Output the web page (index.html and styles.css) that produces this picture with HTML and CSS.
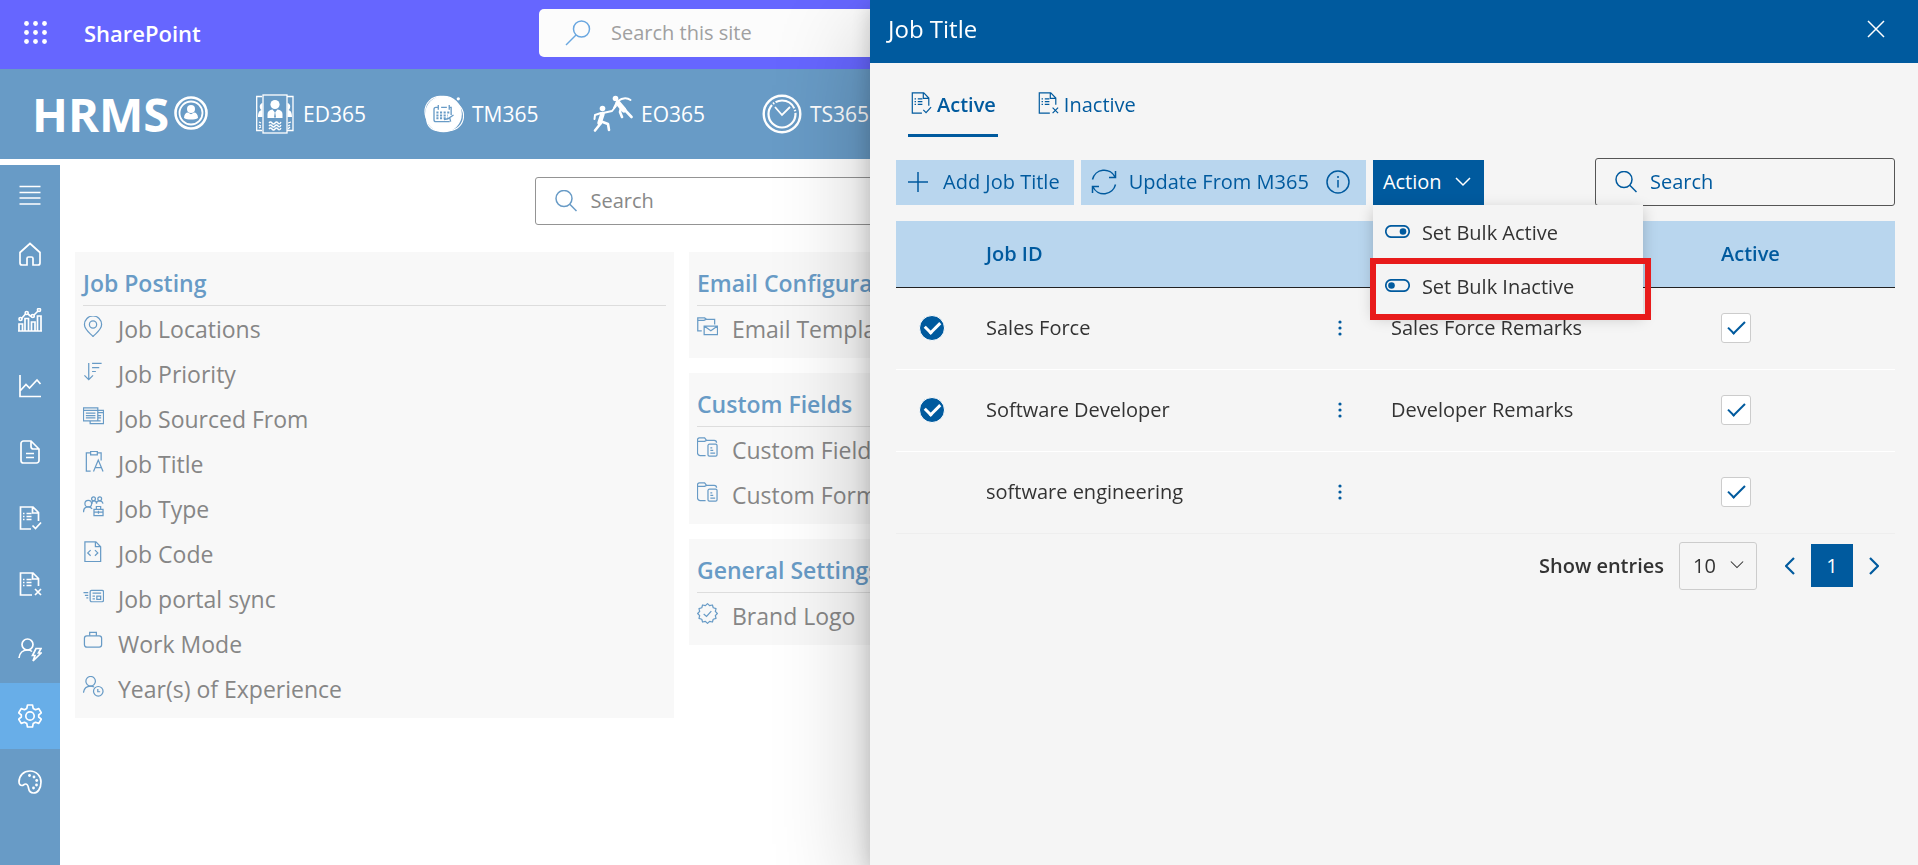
FILE: index.html
```html
<!DOCTYPE html>
<html lang="en">
<head>
<meta charset="utf-8">
<meta name="viewport" content="width=device-width, initial-scale=1">
<title>HRMS - Job Title</title>
<link rel="stylesheet" href="styles.css">
</head>
<body>
<svg class="sprite" aria-hidden="true">
  <symbol id="i-list-check" viewBox="0 0 24 24"><path d="M13 23H2.500V1H15l5.500 5.500V15M14.500 1.500V7H20"/><path d="M5 7.500h1.500M8.500 7.500h5M5 10.500h1.500M8.500 10.500h5M5 13.500h1.500M8.500 13.500h5"/><path d="m14.500 19.500 3 3 5.500-6"/></symbol>
  <symbol id="i-list-x" viewBox="0 0 24 24"><path d="M14 23H2.500V1H15l5.500 5.500V14M14.500 1.500V7H20"/><path d="M5 7.500h1.500M8.500 7.500h5M5 10.500h1.500M8.500 10.500h5M5 13.500h1.500M8.500 13.500h5"/><path d="m17 17 6 6m0-6-6 6"/></symbol>
  <symbol id="i-folder-form" viewBox="0 0 22 22"><path d="M9 19.500H3.500a3 3 0 0 1-3-3V3a2 2 0 0 1 2-2h5.500l2 2.500H18a2.500 2.500 0 0 1 2.500 2.500M.5 4.500h7.500l2-1"/><rect x="11.500" y="7.500" width="9.500" height="12.500" rx="1.500"/><path d="M14 11.500h2M14 14h3M14 16.800h5"/></symbol>
  <symbol id="i-search" viewBox="0 0 22 22"><circle cx="9" cy="8.500" r="8"/><path d="m14.800 14.300 6.700 6.700"/></symbol>
  <symbol id="i-chevron" viewBox="0 0 16 16"><path d="m1 4 7 7 7-7"/></symbol>
</svg>

<div class="page">
  <header class="suite-bar">
    <button class="waffle" aria-label="App launcher">
      <svg width="24" height="24" viewBox="0 0 24 24"><circle cx="2.500" cy="2.500" r="2.400"/><circle cx="11.500" cy="2.500" r="2.400"/><circle cx="20.500" cy="2.500" r="2.400"/><circle cx="2.500" cy="11.500" r="2.400"/><circle cx="11.500" cy="11.500" r="2.400"/><circle cx="20.500" cy="11.500" r="2.400"/><circle cx="2.500" cy="20.500" r="2.400"/><circle cx="11.500" cy="20.500" r="2.400"/><circle cx="20.500" cy="20.500" r="2.400"/></svg>
    </button>
    <a class="suite-name" href="#">SharePoint</a>
    <label class="suite-search">
      <svg width="26" height="26" viewBox="0 0 26 26"><circle cx="16.500" cy="9" r="8"/><path d="M11 15 1 25"/></svg>
      <input type="search" placeholder="Search this site" aria-label="Search this site">
    </label>
  </header>

  <div class="app-bar">
    <a class="logo" href="#">HRMS<svg width="34" height="34" viewBox="0 0 34 34"><circle cx="17" cy="17" r="15.500" stroke-width="2.600"/><circle cx="17" cy="17" r="11.500" stroke-width="1.800"/><g fill="#fff" stroke="none"><circle cx="17" cy="13" r="4"/><path d="M10 22c0-3.500 1.800-5.500 4-5.500l3 1.800 3-1.800c2.200 0 4 2 4 5.500-3 2-11 2-14 0z"/></g></svg></a>
    <nav class="apps">
      <a href="#"><svg width="40" height="40" viewBox="0 0 40 40"><g stroke-width="1.300"><path d="M7 2.500H1.700v34H7M32 2.500h6v34h-6"/><rect x="8" y="1" width="24" height="38"/><path d="M14 29q1.500-2 3 0t3 0 3 0 3-1M14 32q1.500-2 3 0t3 0 3 0 3-1M14 35q1.500-2 3 0t3 0 3 0 3-1M4 28l2 1M4 31l2 1M4 34l2-1M33 29l3-1M33 32l2-1M33 35l2-2"/></g><g fill="#fff" stroke="none"><circle cx="20" cy="10.500" r="4.600"/><path d="M12.500 24v-4c0-2.500 2-4 5-4.500l2.500 3 2.500-3c3 .5 5 2 5 4.500v4z"/><path d="M7.500 9c-4 1-3 6-1 7-3 1-3.500 4-3.500 7h4.500zM32.500 9c4 1 3 6 1 7 3 1 3.500 4 3.500 7h-4.500z"/></g><path d="m20 17-1 6.500h2z" fill="#689bc6" stroke="none"/></svg>ED365</a>
      <a href="#"><svg width="40" height="40" viewBox="0 0 42 40"><g stroke-width="1.200"><circle cx="17" cy="17.500" r="16"/><circle cx="26" cy="22" r="15.500"/><circle cx="14.500" cy="26" r="11.500"/></g><circle cx="20.500" cy="20" r="18.500" fill="#fff"/><circle cx="36" cy="4" r="1.700" fill="#fff" stroke="none"/><g stroke="#689bc6" stroke-width="1.400"><path d="M27 28H12.500a2 2 0 0 1-2-2V15a2 2 0 0 1 2-2H15m3 0h6m3 0h1.500v8M15 10.500v5M26.500 10.500v5"/><path d="M13 18.500h14M13 21.500h12M13 24.500h12" stroke-dasharray="2.200 1.600" stroke-width="2"/><path d="m21 26 4-1 6-4M27 24l1 4"/></g></svg>TM365</a>
      <a href="#"><svg width="40" height="40" viewBox="0 0 40 40" stroke-linecap="round" stroke-linejoin="round"><g fill="#fff" stroke="none"><circle cx="9.500" cy="14.500" r="2.800"/><circle cx="22.500" cy="4.500" r="2.800"/></g><path d="m9.500 20-3 9" stroke-width="4.500"/><path d="m8 29-6 7.500M7 27l8 3 1 6" stroke-width="2.600"/><path d="m8 19-6 2-.5 4M10 19l9-2 4-5" stroke-width="2"/><path d="m25 9 6 7" stroke-width="5"/><path d="m31 15 7.500 8M28 14l-1 4 2 5" stroke-width="2.600"/><path d="M25 7c5-4 10-3 12.500-1M24 8l-3 6" stroke-width="2"/></svg>EO365</a>
      <a href="#"><svg width="40" height="40" viewBox="0 0 40 40"><circle cx="20" cy="20" r="18.300" stroke-width="2.400"/><circle cx="20" cy="20" r="13.500" stroke-width="2.200" stroke-dasharray="52 1.500 1.500 1.500 22 1.500 1.500 1.500"/><path d="m13 13 7 8 8-8" stroke-width="1.800"/></svg>TS365</a>
    </nav>
  </div>

  <div class="workspace">
    <nav class="rail" aria-label="Main">
      <button class="rail-menu" aria-label="Menu"><svg viewBox="0 0 24 24"><path d="M1.500 3.500h21M1.500 9.500h21M1.500 15h21M1.500 21h21"/></svg></button>
      <a href="#" aria-label="Home"><svg viewBox="0 0 24 24"><path d="M2 10.500 12 1.500l10 9V21a2 2 0 0 1-2 2h-5v-6.500a1.500 1.500 0 0 0-1.500-1.500h-3A1.500 1.500 0 0 0 9 16.500V23H4a2 2 0 0 1-2-2z"/></svg></a>
      <a href="#" aria-label="Dashboard"><svg viewBox="0 0 24 24"><path d="M1 23v-7h3.500v7M7 23V10.500h3.500V23M13.500 23v-9H17v9M19.500 23V8H23v15M0 23h24M3.500 10.500l4-4.500M10 6l3 2.500M16 7l4-4"/><circle cx="2.500" cy="11" r="1.500"/><circle cx="8.700" cy="5" r="1.500"/><circle cx="14.800" cy="8" r="1.500"/><circle cx="21" cy="2" r="1.500"/></svg></a>
      <a href="#" aria-label="Reports"><svg viewBox="0 0 24 24"><path d="M2 1v21.500h21M2 17l6-6.500 3.500 3.500L19 6l3.500 4"/></svg></a>
      <a href="#" aria-label="Documents"><svg viewBox="0 0 24 24"><path d="M13 1H5.500A2.500 2.500 0 0 0 3 3.500v17A2.500 2.500 0 0 0 5.500 23h13a2.500 2.500 0 0 0 2.500-2.500V9zM13 1v5.500A2.500 2.500 0 0 0 15.500 9H21M8 13.500h8M8 17.500h8"/></svg></a>
      <a href="#" aria-label="Approved"><svg><use href="#i-list-check"/></svg></a>
      <a href="#" aria-label="Rejected"><svg><use href="#i-list-x"/></svg></a>
      <a href="#" aria-label="User actions"><svg viewBox="0 0 24 24"><circle cx="9.500" cy="6.500" r="5.500"/><path d="M1 20c.5-5 4-8 8.500-8 2 0 3.500.5 4.500 1.500M18 10.500h5L20.500 15H23l-8 8 2-5.500h-2.500z"/></svg></a>
      <a href="#" aria-label="Settings" class="is-current"><svg viewBox="0 0 24 24"><circle cx="12" cy="12" r="4.200"/><path d="M9.500 1h5l.7 3.400 2.300 1.300 3.300-1.100 2.500 4.200L20.700 11v2l2.600 2.200-2.500 4.200-3.300-1.100-2.300 1.300-.7 3.400h-5l-.7-3.400-2.300-1.300-3.300 1.100L.7 15.200 3.300 13v-2L.7 8.800l2.500-4.200 3.300 1.100 2.300-1.300z" stroke-linejoin="round"/></svg></a>
      <a href="#" aria-label="Theme"><svg viewBox="0 0 24 24"><path d="M1 12C1 5.500 5.500 1 12 1s11 5 11 11c0 7-3.500 11-7.500 11-3 0-4.500-2-5-5-.4-2.500-1-4-3-4-1.500 0-2 1.500-3.500 1.500S1 14.500 1 12z"/><g fill="#fff" stroke="none"><circle cx="11.500" cy="5.500" r="1.400"/><circle cx="16" cy="7" r="1.400"/><circle cx="18.700" cy="10.500" r="1.400"/><circle cx="18.500" cy="15" r="1.400"/><circle cx="15.500" cy="18" r="1.400"/></g></svg></a>
    </nav>

    <main class="main">
      <label class="page-search">
        <svg width="22" height="22"><use href="#i-search"/></svg>
        <input type="search" placeholder="Search" aria-label="Search settings">
      </label>
      <div class="columns">
        <div class="column">
          <section class="card">
            <h2>Job Posting</h2>
            <ul>
              <li><a href="#"><svg viewBox="0 0 22 22"><path d="M10.500 21.500C6 17 1.500 14 1.500 9a9 9 0 0 1 18 0c0 5-4.500 8-9 12.500z"/><circle cx="10.500" cy="9" r="3.800"/></svg>Job Locations</a></li>
              <li><a href="#"><svg viewBox="0 0 22 22"><path d="M6 2v17.500M1.500 15 6 19.500l4.500-4.500M9.500 2.500h10M9.500 7h7.500M9.500 11h4"/></svg>Job Priority</a></li>
              <li><a href="#"><svg viewBox="0 0 22 22"><path d="M.5 2h15v13.500H.5zM.5 4.500h15M3 7.500h10M3 10h10M3 12.500h10M15.500 4.500h6V18.500h-14v-3M15.500 7h6M15.500 10h3.500M15.500 12.500h3.500M15.500 15.500h3"/></svg>Job Sourced From</a></li>
              <li><a href="#"><svg viewBox="0 0 22 22"><path d="M8 21H3.500V2H8m7 0h4v8M8 .5h7V4H8zM11 21.500l5-12 5 12M13 17.500h6.500"/></svg>Job Title</a></li>
              <li><a href="#"><svg viewBox="0 0 22 22"><circle cx="5.500" cy="8" r="3.500"/><path d="M.5 17c0-3.500 2-5.500 5-5.500 1.500 0 3 .5 4 2"/><circle cx="11" cy="3" r="2"/><circle cx="17.500" cy="3" r="2"/><path d="M9.500 8c0-2 .5-3 2-3s2.700 1 2.700 3c0-2 1-3 3-3s3.300 1 3.800 3M11.500 14h9.500v6.500h-9.500zM14 14v-3h4.500v3M11.500 17h9.500M16.200 15.500v3"/></svg>Job Type</a></li>
              <li><a href="#"><svg viewBox="0 0 22 22"><path d="M2 .8h11.500L18.500 6v15.500H2zM13 1v5h5M8 9.500l-3 3 3 3M12.500 9.500l3 3-3 3"/></svg>Job Code</a></li>
              <li><a href="#"><svg viewBox="0 0 22 22"><rect x="7.500" y="4.500" width="14" height="12" rx="1.500"/><path d="M.5 7h5M2 9.800h3.500M3.500 12.500h2M10 7.500h9M10 10.500h2.500M10 13.500h2.500M14.500 10.500h4v3.500h-4z"/></svg>Job portal sync</a></li>
              <li><a href="#"><svg viewBox="0 0 22 22"><rect x="1.500" y="5" width="18" height="12" rx="2.500"/><path d="M7 5V1.500h7V5"/></svg>Work Mode</a></li>
              <li><a href="#"><svg viewBox="0 0 22 22"><circle cx="8" cy="5.500" r="5"/><path d="M.5 17.500c.5-4.500 3.500-7 7.500-7 1.500 0 2.500.3 3.500 1"/><circle cx="16" cy="16" r="5"/><path d="M15.500 13.500v3H18"/></svg>Year(s) of Experience</a></li>
            </ul>
          </section>
        </div>
        <div class="column">
          <section class="card">
            <h2>Email Configuration</h2>
            <ul>
              <li><a href="#"><svg viewBox="0 0 22 22"><path d="M5 15.500H.8V2H8l2 1.500h8.500V9M.8 4.500h6.500l2-1M7.500 10.500h14v9h-14zl7 5 7-5"/></svg>Email Templates</a></li>
            </ul>
          </section>
          <section class="card">
            <h2>Custom Fields</h2>
            <ul>
              <li><a href="#"><svg><use href="#i-folder-form"/></svg>Custom Fields</a></li>
              <li><a href="#"><svg><use href="#i-folder-form"/></svg>Custom Forms</a></li>
            </ul>
          </section>
          <section class="card">
            <h2>General Settings</h2>
            <ul>
              <li><a href="#"><svg viewBox="0 0 22 22"><path stroke-linejoin="round" d="M11 .7 13.200 2.800 16.150 2.080 17 5 19.920 5.850 19.200 8.800 21.300 11 19.200 13.200 19.920 16.150 17 17 16.150 19.920 13.200 19.200 11 21.300 8.800 19.200 5.850 19.920 5 17 2.080 16.150 2.800 13.200.7 11 2.800 8.800 2.080 5.850 5 5 5.850 2.080 8.800 2.800z"/><path d="m7 11.500 3 2.500 5-5.500"/></svg>Brand Logo</a></li>
            </ul>
          </section>
        </div>
      </div>
    </main>
  </div>
</div>

<aside class="panel" role="dialog" aria-labelledby="panel-title">
  <header class="panel-head">
    <h1 id="panel-title">Job Title</h1>
    <button class="close" aria-label="Close"><svg width="18" height="18" viewBox="0 0 18 18"><path d="m1 1 16 16M17 1 1 17"/></svg></button>
  </header>
  <div class="panel-body">
    <div class="tabs" role="tablist">
      <button role="tab" aria-selected="true" class="tab is-active"><svg width="22" height="22"><use href="#i-list-check"/></svg>Active</button>
      <button role="tab" aria-selected="false" class="tab"><svg width="22" height="22"><use href="#i-list-x"/></svg>Inactive</button>
    </div>

    <div class="toolbar">
      <button class="tool tool-add"><svg width="20" height="20" viewBox="0 0 20 20"><path d="M10 0v20M0 10h20"/></svg>Add Job Title</button>
      <button class="tool tool-update"><svg width="26" height="26" viewBox="0 0 26 26"><path d="M1.500 10.500A12 12 0 0 1 24 8M24.500 2v6.500H18M24.500 15.500A12 12 0 0 1 2 18M1.500 24v-6.500H8"/></svg>Update From M365<svg class="info" width="24" height="24" viewBox="0 0 24 24"><circle cx="12" cy="12" r="11"/><path d="M12 10v7.500M12 6v2"/></svg></button>
      <div class="action">
        <button class="action-btn" aria-haspopup="menu" aria-expanded="true">Action<svg width="16" height="16"><use href="#i-chevron"/></svg></button>
        <div class="menu" role="menu">
          <button role="menuitem"><svg width="25" height="13" viewBox="0 0 25 13"><rect x=".8" y=".8" width="23.400" height="11.400" rx="5.700"/><circle cx="18" cy="6.500" r="3.300"/></svg>Set Bulk Active</button>
          <button role="menuitem" class="is-marked"><svg width="25" height="13" viewBox="0 0 25 13"><rect x=".8" y=".8" width="23.400" height="11.400" rx="5.700"/><circle cx="6.500" cy="6.500" r="3.300"/></svg>Set Bulk Inactive</button>
        </div>
      </div>
      <label class="panel-search">
        <svg width="22" height="22"><use href="#i-search"/></svg>
        <input type="search" placeholder="Search" aria-label="Search job titles">
      </label>
    </div>

    <table class="grid">
      <colgroup><col class="c-pick"><col class="c-id"><col class="c-more"><col class="c-remarks"><col class="c-active"></colgroup>
      <thead>
        <tr><th></th><th scope="col">Job ID</th><th></th><th scope="col" aria-label="Remarks"></th><th scope="col">Active</th></tr>
      </thead>
      <tbody>
        <tr><td class="pick"><input type="checkbox" checked aria-label="Select Sales Force"></td><td>Sales Force</td><td class="more"><button aria-label="More"><svg width="4" height="16" viewBox="0 0 4 16"><circle cx="2" cy="2" r="1.600"/><circle cx="2" cy="8" r="1.600"/><circle cx="2" cy="14" r="1.600"/></svg></button></td><td>Sales Force Remarks</td><td class="state"><input type="checkbox" checked aria-label="Sales Force active"></td></tr>
        <tr><td class="pick"><input type="checkbox" checked aria-label="Select Software Developer"></td><td>Software Developer</td><td class="more"><button aria-label="More"><svg width="4" height="16" viewBox="0 0 4 16"><circle cx="2" cy="2" r="1.600"/><circle cx="2" cy="8" r="1.600"/><circle cx="2" cy="14" r="1.600"/></svg></button></td><td>Developer Remarks</td><td class="state"><input type="checkbox" checked aria-label="Software Developer active"></td></tr>
        <tr><td class="pick"><input type="checkbox" aria-label="Select software engineering"></td><td>software engineering</td><td class="more"><button aria-label="More"><svg width="4" height="16" viewBox="0 0 4 16"><circle cx="2" cy="2" r="1.600"/><circle cx="2" cy="8" r="1.600"/><circle cx="2" cy="14" r="1.600"/></svg></button></td><td></td><td class="state"><input type="checkbox" checked aria-label="software engineering active"></td></tr>
      </tbody>
    </table>

    <div class="pager">
      <label for="entries">Show entries</label>
      <div class="select">
        <select id="entries"><option>10</option><option>20</option><option>50</option></select>
        <svg width="14" height="14"><use href="#i-chevron"/></svg>
      </div>
      <button class="step" aria-label="Previous page"><svg width="10" height="18" viewBox="0 0 10 18"><path d="M9 1 1 9l8 8"/></svg></button>
      <button class="current" aria-current="page">1</button>
      <button class="step" aria-label="Next page"><svg width="10" height="18" viewBox="0 0 10 18"><path d="m1 1 8 8-8 8"/></svg></button>
    </div>
  </div>
</aside>
</body>
</html>
```
FILE: styles.css
```css
:root {
  --brand: #005a9e;
  --brand-soft: #689bc6;
  --brand-pale: #b9d6ee;
  --surface: #f5f5f5;
  --text: #333;
  --font: "Open Sans", "Noto Sans", sans-serif;
}

* { box-sizing: border-box; }

html, body { height: 100%; }

body {
  margin: 0;
  overflow: hidden;
  background: #fff;
  color: var(--text);
  font: 20px/28px var(--font);
}

button, input, select { font: inherit; color: inherit; }
button { padding: 0; border: 0; background: none; cursor: pointer; }
a { color: inherit; text-decoration: none; }
svg { display: block; flex: none; fill: none; stroke: currentColor; stroke-width: 1.500; }
input[type="search"] {
  appearance: none;
  flex: 1;
  min-width: 0;
  padding: 0;
  border: 0;
  outline: 0;
  background: none;
}
input::placeholder { color: inherit; opacity: 1; }
.sprite { position: absolute; width: 0; height: 0; }

.page { display: flex; flex-direction: column; height: 100%; }

/* Suite bar */
.suite-bar {
  display: flex;
  align-items: center;
  flex: none;
  height: 69px;
  padding: 0 24px 3px;
  background: #66f;
  color: #fff;
}
.waffle svg { fill: #fff; stroke: none; }
.suite-name { width: 455px; margin-left: 36px; font-weight: 600; font-size: 22px; }
.suite-search {
  display: flex;
  align-items: center;
  gap: 20px;
  width: 840px;
  height: 48px;
  padding: 0 26px;
  border-radius: 5px;
  background: #fcfcfc;
  color: #a0a0a0;
}
.suite-search svg { color: #6aa7e0; }

/* App bar */
.app-bar {
  display: flex;
  align-items: center;
  flex: none;
  height: 90px;
  margin-bottom: 6px;
  padding: 0 32px;
  background: var(--brand-soft);
  color: #fff;
}
.logo {
  display: flex;
  align-items: center;
  gap: 5px;
  width: 223px;
  font-size: 47px;
  font-weight: 700;
  line-height: 60px;
}
.logo svg { margin-bottom: 2px; }
.apps { display: grid; grid-auto-flow: column; grid-auto-columns: 169px; }
.apps a { display: flex; align-items: center; gap: 8px; font-size: 21px; }

/* Side rail */
.workspace { display: flex; flex: 1; min-height: 0; }
.rail {
  display: flex;
  flex-direction: column;
  flex: none;
  width: 60px;
  background: var(--brand-soft);
  color: #fff;
}
.rail a, .rail-menu { display: grid; place-items: center; height: 66px; }
.rail .rail-menu { height: 56px; padding-top: 4px; }
.rail svg { width: 24px; height: 24px; stroke-width: 1.700; }
.rail .is-current { background: #68aee8; }

/* Settings area */
.main { flex: 1; min-width: 0; padding: 12px 16px 15px 15px; }
.page-search {
  display: flex;
  align-items: center;
  gap: 14px;
  width: 908px;
  height: 48px;
  margin: 0 auto 27px;
  padding: 0 19px;
  border: 1px solid #949494;
  border-radius: 3px;
  color: #888;
}
.page-search svg { color: var(--brand-soft); }
.columns { display: grid; grid-template-columns: repeat(3, 1fr); gap: 15px; }
.column { display: flex; flex-direction: column; gap: 15px; }
.card { padding: 8px 8px 7px; background: #f8f8f8; }
.card h2 {
  margin: 0;
  padding: 9px 0 8px;
  border-bottom: 1px solid #ddd;
  color: var(--brand-soft);
  font-size: 23px;
  font-weight: 600;
  line-height: 28px;
}
.card ul { margin: 0; padding: 0; list-style: none; }
.card li a { display: flex; align-items: center; gap: 14px; height: 45px; color: #868686; font-size: 23px; }
.card li svg { width: 21px; height: 21px; margin-bottom: 4px; color: var(--brand-soft); stroke-width: 1.300; }

/* Side panel */
.panel {
  position: fixed;
  inset: 0 0 0 auto;
  width: 1048px;
  max-width: 100%;
  background: var(--surface);
  box-shadow: 0 32px 90px rgba(0, 0, 0, .24), 0 6px 20px rgba(0, 0, 0, .18);
}
.panel-head {
  display: flex;
  align-items: center;
  justify-content: space-between;
  height: 63px;
  padding: 0 33px 6px 18px;
  background: var(--brand);
  color: #fff;
}
.panel-head h1 { margin: 0; font-size: 24px; font-weight: 400; }
.panel-body { padding: 17px 23px 20px 26px; }

.tabs { display: flex; gap: 37px; padding-left: 12px; margin-bottom: 21px; color: var(--brand); }
.tab { display: flex; align-items: center; gap: 5px; height: 57px; padding: 0 2px 5px; border-bottom: 3px solid transparent; }
.tab.is-active { border-bottom-color: var(--brand); font-weight: 600; }
.tab svg { margin-bottom: 4px; stroke-width: 1.300; }

.toolbar { display: flex; align-items: center; gap: 7px; margin-bottom: 15px; }
.tool { display: flex; align-items: center; height: 45px; background: var(--brand-pale); color: var(--brand); }
.tool-add { gap: 15px; padding: 0 14px 0 12px; }
.tool-update { gap: 12px; padding: 0 16px 0 10px; }
.tool .info { margin-left: 5px; }
.action { position: relative; }
.action-btn { display: flex; align-items: center; gap: 13px; height: 45px; padding: 0 13px 0 10px; background: var(--brand); color: #fff; }
.menu {
  position: absolute;
  top: 100%;
  left: 0;
  z-index: 1;
  width: 270px;
  padding-top: 1px;
  background: #f4f4f4;
  box-shadow: 0 4px 14px rgba(0, 0, 0, .2);
}
.menu button { position: relative; display: flex; align-items: center; gap: 12px; width: 100%; height: 54px; padding-left: 12px; }
.menu svg { margin-bottom: 3px; color: var(--brand); stroke-width: 1.700; }
.menu circle { fill: currentColor; stroke: none; }
.menu .is-marked::after { content: ""; position: absolute; inset: -2px -8px -6px -3px; border: 6px solid #e81b1b; }
.panel-search {
  display: flex;
  align-items: center;
  gap: 13px;
  width: 300px;
  height: 48px;
  margin-left: auto;
  padding: 0 19px;
  border: 1px solid #555;
  border-radius: 3px;
  color: var(--brand);
}

/* Job title table */
.grid { width: 100%; border-collapse: collapse; table-layout: fixed; }
.c-pick { width: 90px; }
.c-more { width: 74px; }
.c-remarks { width: 330px; }
.c-active { width: 174px; }
.grid th { height: 66px; padding: 0; border-bottom: 1px solid #222; background: var(--brand-pale); color: var(--brand); font-weight: 600; text-align: left; }
.grid td { height: 82px; padding: 0; border-bottom: 1px solid #fff; }
.grid tr:last-child td { border-color: #eee; }
.grid input { appearance: none; display: grid; place-items: center; margin: 0; }
.grid input::after { content: ""; border: solid; border-width: 0 0 1px 1px; transform: rotate(-45deg); }
.pick input { width: 26px; height: 26px; margin-left: 23px; border: 1px solid #fff; border-radius: 50%; background: var(--brand); color: #fff; }
.pick input:not(:checked) { opacity: 0; }
.pick input::after { width: 12px; height: 7px; margin-bottom: 4px; border-width: 0 0 3px 3px; }
.more button { display: block; margin-left: 21px; }
.more svg { fill: var(--brand); stroke: none; }
.state input { width: 30px; height: 30px; border: 1px solid #ccc; border-radius: 3px; background: #fff; color: var(--brand); }
.state input::after { width: 15px; height: 7px; margin-bottom: 5px; border-width: 0 0 2px 2px; }

/* Pager */
.pager { display: flex; align-items: center; justify-content: flex-end; padding: 8px 16px 0 0; }
.pager label { font-weight: 600; }
.select { position: relative; margin: 0 28px 0 15px; }
.select select { appearance: none; width: 78px; height: 48px; padding: 0 13px; border: 1px solid #ccc; border-radius: 3px; background: transparent; }
.select svg { position: absolute; top: 16px; right: 13px; stroke-width: 1.200; pointer-events: none; }
.step { color: var(--brand); }
.step svg { stroke-width: 2.200; }
.current { width: 42px; height: 43px; margin: 0 16px; background: var(--brand); color: #fff; }
```
